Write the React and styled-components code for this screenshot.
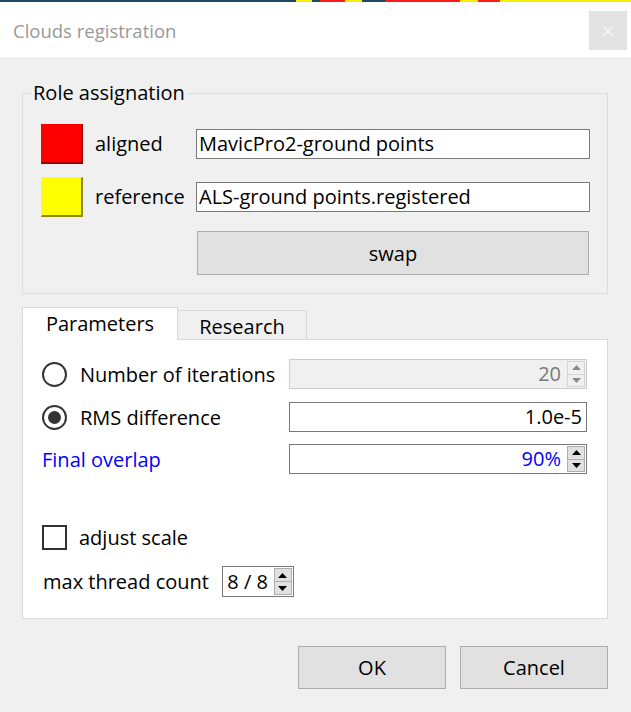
import styled, { createGlobalStyle } from 'styled-components';

const GlobalStyle = createGlobalStyle`
   html, body {
      margin: 0;
      padding: 0;
      background: #f0f0f0;
   }
   body {
      font-family: 'Open Sans', 'Noto Sans', sans-serif;
      font-size: 20px;
      color: #000;
   }
   * {
      box-sizing: border-box;
   }
`;

const UpArrow = ({ color = '#000' }) => (
   <svg width='9' height='5' viewBox='0 0 9 5'>
      <polygon points='0,5 4.5,0 9,5' fill={color} />
   </svg>
);

const DownArrow = ({ color = '#000' }) => (
   <svg width='9' height='5' viewBox='0 0 9 5'>
      <polygon points='0,0 9,0 4.5,5' fill={color} />
   </svg>
);

const SpinBox = ({ value, disabled, blue, width }) => (
   <SpinWrap $disabled={disabled} $width={width}>
      <SpinValue $disabled={disabled} $blue={blue}>
         {value}
      </SpinValue>
      <SpinButtons>
         <SpinBtn $disabled={disabled}>
            <UpArrow color={disabled ? '#8a8a8a' : '#000'} />
         </SpinBtn>
         <SpinBtn $disabled={disabled}>
            <DownArrow color={disabled ? '#8a8a8a' : '#000'} />
         </SpinBtn>
      </SpinButtons>
   </SpinWrap>
);

const App = () => {
   return (
      <Window>
         <GlobalStyle />
         <TopStrip />
         <TitleBar>
            <Title>Clouds registration</Title>
            <CloseBox>×</CloseBox>
         </TitleBar>

         <Body>
            <GroupBox>
               <Legend>Role assignation</Legend>
               <RoleGrid>
                  <Swatch $color='#ff0000' $shade='#a00000' />
                  <RoleLabel>aligned</RoleLabel>
                  <TextField>MavicPro2-ground points</TextField>

                  <Swatch $color='#ffff00' $shade='#8a8a00' />
                  <RoleLabel>reference</RoleLabel>
                  <TextField>ALS-ground points.registered</TextField>

                  <SwapButton>swap</SwapButton>
               </RoleGrid>
            </GroupBox>

            <Tabs>
               <TabBar>
                  <Tab $active $width={156}>
                     Parameters
                  </Tab>
                  <Tab $width={130}>Research</Tab>
               </TabBar>
               <TabPane>
                  <ParamGrid>
                     <OptionLabel>
                        <Radio />
                        Number of iterations
                     </OptionLabel>
                     <SpinBox value='20' disabled />

                     <OptionLabel>
                        <Radio $checked />
                        RMS difference
                     </OptionLabel>
                     <LineEdit>1.0e-5</LineEdit>

                     <BlueLabel>Final overlap</BlueLabel>
                     <SpinBox value='90%' blue />
                  </ParamGrid>

                  <CheckRow>
                     <CheckBox />
                     adjust scale
                  </CheckRow>

                  <ThreadRow>
                     max thread count
                     <SpinBox value='8 / 8' width={72} />
                  </ThreadRow>
               </TabPane>
            </Tabs>

            <ButtonRow>
               <PushButton>OK</PushButton>
               <PushButton>Cancel</PushButton>
            </ButtonRow>
         </Body>
      </Window>
   );
};

export default App;

const Window = styled.div`
   width: 631px;
   height: 712px;
   overflow: hidden;
   background: #f0f0f0;
`;

const TopStrip = styled.div`
   height: 2px;
   background: linear-gradient(
      to right,
      #1d4a5e 0px,
      #1d4a5e 296px,
      #f5f000 296px,
      #f5f000 312px,
      #1d4a5e 312px,
      #1d4a5e 320px,
      #ff1a1a 320px,
      #ff1a1a 345px,
      #f5f000 345px,
      #f5f000 362px,
      #1d4a5e 362px,
      #1d4a5e 385px,
      #ff1a1a 385px,
      #ff1a1a 460px,
      #f5f000 460px,
      #f5f000 478px,
      #ff1a1a 478px,
      #ff1a1a 500px,
      #f5f000 500px
   );
`;

const TitleBar = styled.div`
   height: 55px;
   background: #fff;
   display: flex;
   align-items: center;
   justify-content: space-between;
   padding: 0 4px 0 13px;
`;

const Title = styled.div`
   color: #999;
   font-size: 18.5px;
   line-height: 26px;
   margin-top: 3px;
`;

const CloseBox = styled.div`
   width: 38px;
   height: 39px;
   background: #e3e3e3;
   color: #f7f7f7;
   display: flex;
   align-items: center;
   justify-content: center;
   font-size: 22px;
   line-height: 1;
   margin-top: 1px;
`;

const Body = styled.div`
   padding: 0 23px 0 22px;
`;

const GroupBox = styled.fieldset`
   margin: 23px 0 0;
   border: 1px solid #dcdcdc;
   padding: 18px 17px 18px 18px;
   min-width: 0;
`;

const Legend = styled.legend`
   padding: 0 2px;
   margin-left: -10px;
   line-height: 26px;
   height: 26px;
`;

const RoleGrid = styled.div`
   display: grid;
   grid-template-columns: 42px 89px 1fr;
   grid-template-rows: 40px 40px auto;
   column-gap: 12px;
   row-gap: 13px;
   align-items: center;
`;

const Swatch = styled.div`
   width: 42px;
   height: 40px;
   background: ${(p) => p.$color};
   border-top: 1px solid ${(p) => p.$color};
   border-left: 1px solid ${(p) => p.$color};
   border-right: 2px solid ${(p) => p.$shade};
   border-bottom: 2px solid ${(p) => p.$shade};
`;

const RoleLabel = styled.div`
   white-space: nowrap;
   line-height: 26px;
`;

const TextField = styled.div`
   height: 30px;
   border: 1px solid #7a7a7a;
   background: #fff;
   padding: 0 2px;
   line-height: 28px;
   white-space: nowrap;
   overflow: hidden;
`;

const SwapButton = styled.div`
   grid-column: 3;
   height: 44px;
   margin: 1px 1px 0;
   background: #e1e1e1;
   border: 1px solid #adadad;
   display: flex;
   align-items: center;
   justify-content: center;
`;

const Tabs = styled.div`
   margin-top: 13px;
`;

const TabBar = styled.div`
   display: flex;
   align-items: flex-end;
   height: 33px;
   margin-bottom: -1px;
   position: relative;
   z-index: 1;
`;

const Tab = styled.div`
   width: ${(p) => p.$width}px;
   height: ${(p) => (p.$active ? 33 : 30)}px;
   margin-left: ${(p) => (p.$active ? 0 : -1)}px;
   background: ${(p) => (p.$active ? '#fff' : '#f0f0f0')};
   border: 1px solid #d9d9d9;
   border-bottom: ${(p) => (p.$active ? '1px solid #fff' : '1px solid #d9d9d9')};
   display: flex;
   align-items: center;
   justify-content: center;
   padding-top: ${(p) => (p.$active ? 0 : 2)}px;
`;

const TabPane = styled.div`
   background: #fff;
   border: 1px solid #d9d9d9;
   padding: 19px 20px 21px 19px;
`;

const ParamGrid = styled.div`
   display: grid;
   grid-template-columns: 1fr 298px;
   grid-template-rows: 30px 30px 28px;
   row-gap: 13px;
   align-items: center;
`;

const OptionLabel = styled.div`
   display: flex;
   align-items: center;
   gap: 13px;
   white-space: nowrap;
`;

const Radio = styled.span`
   width: 25px;
   height: 25px;
   border-radius: 50%;
   border: 2px solid #333;
   display: flex;
   align-items: center;
   justify-content: center;

   &::after {
      content: '';
      display: ${(p) => (p.$checked ? 'block' : 'none')};
      width: 13px;
      height: 13px;
      border-radius: 50%;
      background: #333;
   }
`;

const BlueLabel = styled.div`
   color: #0000ff;
`;

const LineEdit = styled.div`
   height: 30px;
   border: 1px solid #7a7a7a;
   background: #fff;
   text-align: right;
   padding: 0 4px;
   line-height: 28px;
`;

const SpinWrap = styled.div`
   width: ${(p) => (p.$width ? `${p.$width}px` : 'auto')};
   height: ${(p) => (p.$width ? 31 : 30)}px;
   border: 1px solid ${(p) => (p.$disabled ? '#cccccc' : '#7a7a7a')};
   background: ${(p) => (p.$disabled ? '#f0f0f0' : '#fff')};
   display: flex;
   align-items: center;
   padding: 1px 1px 1px 3px;
   gap: 6px;
`;

const SpinValue = styled.div`
   flex: 1;
   text-align: right;
   line-height: 26px;
   white-space: nowrap;
   color: ${(p) => (p.$disabled ? '#7a7a7a' : p.$blue ? '#0000ff' : '#000')};
`;

const SpinButtons = styled.div`
   width: 18px;
   height: 100%;
   display: flex;
   flex-direction: column;
`;

const SpinBtn = styled.div`
   flex: 1;
   display: flex;
   align-items: center;
   justify-content: center;
   background: ${(p) => (p.$disabled ? '#f0f0f0' : '#e1e1e1')};
   border: 1px solid ${(p) => (p.$disabled ? '#d5d5d5' : '#adadad')};

   & + & {
      border-top: none;
   }
`;

const CheckRow = styled.div`
   margin-top: 52px;
   display: flex;
   align-items: center;
   gap: 12px;
   height: 25px;
`;

const CheckBox = styled.span`
   width: 25px;
   height: 25px;
   border: 2px solid #333;
   background: #fff;
`;

const ThreadRow = styled.div`
   margin-top: 16px;
   display: flex;
   align-items: center;
   gap: 13px;
   padding-left: 1px;
   white-space: nowrap;
`;

const ButtonRow = styled.div`
   margin-top: 27px;
   display: flex;
   justify-content: flex-end;
   gap: 14px;
`;

const PushButton = styled.div`
   width: 148px;
   height: 43px;
   background: #e1e1e1;
   border: 1px solid #adadad;
   display: flex;
   align-items: center;
   justify-content: center;
`;
